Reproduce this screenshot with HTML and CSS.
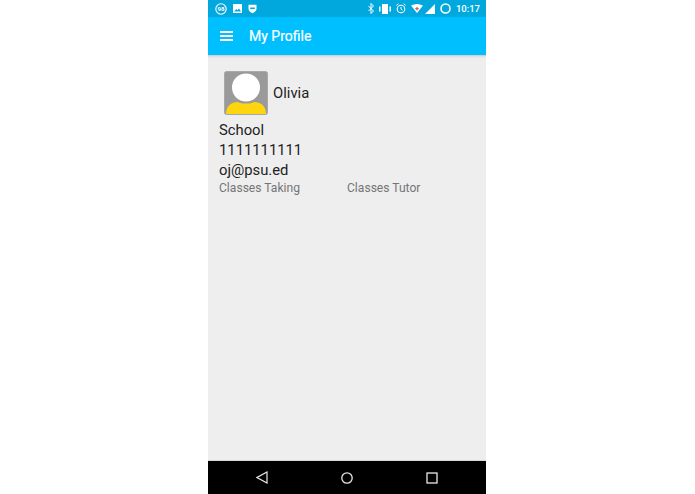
FILE: index.html
```html
<!DOCTYPE html>
<html lang="en">
<head>
    <meta charset="UTF-8">
    <title>My Profile</title>
    <link rel="stylesheet" href="styles.css">
</head>
<body>

    <div class="phone">
        <!-- status bar -->
        <div class="status-bar">
            <div class="status-left">
                <svg width="12" height="12" viewBox="0 0 12 12"><circle cx="6" cy="6" r="5.200" fill="none" stroke="#fff" stroke-width="1.100"/><text x="6" y="8.200" class="badge-text" text-anchor="middle">98</text></svg>
                <svg width="9" height="9" viewBox="0 0 9 9"><path d="M0 0h9v9H0z" fill="#fff"/><path d="M1.200 7.500l2-2.500 1.300 1.300L6 4.500l2 3z" fill="#00a8de"/></svg>
                <svg width="9" height="10" viewBox="0 0 9 10"><path d="M.5.800h8v4c0 2-2 3.600-4 4.500-2-.9-4-2.500-4-4.500z" fill="#fff"/><path d="M2.200 3.500h4.600v1.600H2.200z" fill="#00a8de"/></svg>
            </div>
            <div class="status-right">
                <svg width="6" height="11" viewBox="0 0 6 11"><path d="M.5 3l5 5L3 10.500V.5L5.500 3l-5 5" fill="none" stroke="#fff" stroke-width="1"/></svg>
                <svg width="12" height="10" viewBox="0 0 12 10"><path d="M3 0h6v10H3z" fill="#fff"/><path d="M0 2.500h1.500v5H0zM10.500 2.500H12v5h-1.500z" fill="#fff"/></svg>
                <svg width="10" height="11" viewBox="0 0 10 11"><circle cx="5" cy="6" r="3.800" fill="none" stroke="#fff" stroke-width="1.100"/><path d="M5 4v2.200l1.400 1M.4 2.400L2.400.7M9.600 2.400L7.600.7" fill="none" stroke="#fff" stroke-width="1"/></svg>
                <svg width="12" height="9" viewBox="0 0 12 9"><path d="M0 1.500Q6-1.500 12 1.500L6 9z" fill="#fff"/><path d="M5.400 3h1.200v1.100h1.100v1.200H6.600v1.100H5.400V5.300H4.300V4.100h1.100z" fill="#e2574c"/></svg>
                <svg class="signal" width="10" height="10" viewBox="0 0 10 10"><path d="M10 0v10H0z" fill="#fff"/></svg>
                <svg width="11" height="11" viewBox="0 0 11 11"><circle cx="5.500" cy="5.500" r="4.500" fill="none" stroke="#fff" stroke-width="1.500"/></svg>
                <span class="clock">10:17</span>
            </div>
        </div>

        <!-- toolbar -->
        <div class="toolbar">
            <div class="menu-icon"><span></span><span></span><span></span></div>
            <div class="toolbar-title">My Profile</div>
        </div>

        <!-- profile -->
        <div class="content">
            <div class="profile-head">
                <svg class="avatar" width="44" height="44" viewBox="0 0 44 44">
                    <rect x="0.500" y="0.500" width="43" height="43" rx="2" fill="#9a9a9a" stroke="#a8a8a8"/>
                    <path d="M2 43c0-7 4-12 12-12 3 2 13 2 16 0 8 0 12 5 12 12z" fill="#ffd50f"/>
                    <circle cx="22" cy="16.500" r="14" fill="#fff"/>
                </svg>
                <div class="profile-name">Olivia</div>
            </div>
            <div class="info-line">School</div>
            <div class="info-line">1111111111</div>
            <div class="info-line">oj@psu.ed</div>
            <div class="tabs">
                <div class="tab">Classes Taking</div>
                <div class="tab">Classes Tutor</div>
            </div>
        </div>

        <!-- nav bar -->
        <div class="nav-bar">
            <svg width="12" height="13" viewBox="0 0 12 13"><path d="M11 1v11L1 6.500z" fill="none" stroke="#e8e8e8" stroke-width="1.200"/></svg>
            <svg width="12" height="12" viewBox="0 0 12 12"><circle cx="6" cy="6" r="5.200" fill="none" stroke="#e8e8e8" stroke-width="1.300"/></svg>
            <svg width="12" height="12" viewBox="0 0 12 12"><rect x="1" y="1" width="10" height="10" fill="none" stroke="#e8e8e8" stroke-width="1.300"/></svg>
        </div>
    </div>

</body>
</html>
```

FILE: styles.css
```css
html, body {
    margin: 0;
    padding: 0;
    height: 100%;
    background-color: #fff;
}

body {
    display: flex;
    justify-content: center;
    font-family: Roboto, sans-serif;
}

.phone {
    width: 278px;
    height: 494px;
    margin-left: -1px;
    display: flex;
    flex-direction: column;
    background-color: #eeeeee;
}

.status-bar {
    height: 17px;
    background-color: #00a8de;
    display: flex;
    justify-content: space-between;
    align-items: center;
    padding: 0 6px 0 7px;
    color: #fff;
}

.status-left,
.status-right {
    display: flex;
    align-items: center;
}

.status-left {
    gap: 6px;
}

.status-right {
    gap: 5px;
}

.badge-text {
    font-size: 6px;
    font-weight: 700;
    fill: #fff;
}

.signal {
    margin-left: -3px;
}

.clock {
    font-size: 9.500px;
    font-weight: 500;
}

.toolbar {
    height: 38px;
    box-sizing: border-box;
    background-color: #00bfff;
    display: flex;
    align-items: center;
    padding-left: 12px;
    color: #fff;
}

.menu-icon {
    width: 13px;
    display: flex;
    flex-direction: column;
    gap: 2.800px;
    margin-right: 16px;
}

.menu-icon span {
    display: block;
    height: 1.200px;
    background-color: #fff;
}

.toolbar-title {
    font-size: 14px;
    font-weight: 400;
    -webkit-text-stroke: 0.2px #fff;
}

.content {
    flex: 1;
    padding: 16px 11px 0;
    color: #222;
    background: linear-gradient(#c8cccf, #e6e6e6 2px, #eeeeee 4px);
    border-bottom: 1px solid #d8d8d8;
}

.profile-head {
    display: flex;
    align-items: center;
    padding-left: 5px;
    margin-bottom: 5px;
}

.avatar {
    display: block;
}

.profile-name {
    font-size: 14.800px;
    margin-left: 5px;
}

.info-line {
    font-size: 14.800px;
    line-height: 20px;
}

.tabs {
    display: flex;
    margin-top: 1px;
    color: #757575;
    font-size: 12.100px;
    line-height: 15px;
}

.tab {
    width: 128px;
}

.nav-bar {
    height: 33px;
    flex-shrink: 0;
    box-sizing: border-box;
    background-color: #000;
    display: flex;
    justify-content: space-between;
    align-items: center;
    padding: 0 48px;
}
```
